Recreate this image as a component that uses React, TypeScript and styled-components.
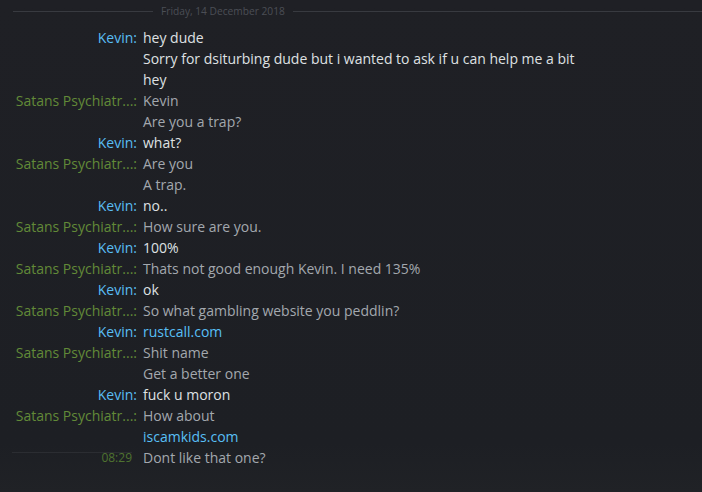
import React from 'react';
import styled, { createGlobalStyle } from 'styled-components';

type Author = 'self' | 'friend';

interface IMessage {
  author?: Author;
  text: string;
  link?: boolean;
  time?: string;
}

const GlobalStyle = createGlobalStyle`
  html, body {
    margin: 0;
    padding: 0;
    background: #1e1f24;
  }
  body {
    font-family: "Open Sans", "Noto Sans", Arial, sans-serif;
  }
`;

const ChatLog = styled.div`
  width: 702px;
  height: 492px;
  overflow: hidden;
  background: linear-gradient(180deg, #1f2025 0%, #1d1f24 90%, #202226 100%);
  box-sizing: border-box;
`;

const DateDivider = styled.div`
  display: flex;
  align-items: center;
  height: 22px;
  padding-left: 13px;
  margin-bottom: 5px;
`;

const DividerLine = styled.div<{ fixed?: boolean }>`
  height: 1px;
  background: #383a40;
  ${(p: { fixed?: boolean }) => (p.fixed ? 'width: 140px;' : 'flex: 1;')}
`;

const DateText = styled.span`
  font-size: 10.2px;
  color: #4b4e55;
  padding: 0 8px;
  white-space: nowrap;
`;

const Row = styled.div`
  display: grid;
  grid-template-columns: 125px 1fr;
  column-gap: 6px;
  padding-left: 12px;
  height: 21px;
  line-height: 21px;
  font-size: 14px;
`;

const Name = styled.div<{ author?: Author }>`
  text-align: right;
  white-space: nowrap;
  color: ${(p: { author?: Author }) => (p.author === 'self' ? '#59bdf3' : '#628a38')};
`;

const Time = styled.div`
  position: relative;
  text-align: right;
  padding-right: 5px;
  font-size: 12px;
  color: #4f7330;

  &::before {
    content: '';
    position: absolute;
    top: 5px;
    left: 0;
    right: 5px;
    height: 1px;
    background: #2b2d32;
  }
`;

const Text = styled.div<{ self: boolean; link?: boolean }>`
  white-space: nowrap;
  color: ${(p: { self: boolean; link?: boolean }) =>
    p.link ? '#58bff5' : p.self ? '#dfe1e3' : '#a3a8ae'};
`;

const messages: IMessage[] = [
  { author: 'self', text: 'hey dude' },
  { text: 'Sorry for dsiturbing dude but i wanted to ask if u can help me a bit' },
  { text: 'hey' },
  { author: 'friend', text: 'Kevin' },
  { text: 'Are you a trap?' },
  { author: 'self', text: 'what?' },
  { author: 'friend', text: 'Are you' },
  { text: 'A trap.' },
  { author: 'self', text: 'no..' },
  { author: 'friend', text: 'How sure are you.' },
  { author: 'self', text: '100%' },
  { author: 'friend', text: 'Thats not good enough Kevin. I need 135%' },
  { author: 'self', text: 'ok' },
  { author: 'friend', text: 'So what gambling website you peddlin?' },
  { author: 'self', text: 'rustcall.com', link: true },
  { author: 'friend', text: 'Shit name' },
  { text: 'Get a better one' },
  { author: 'self', text: 'fuck u moron' },
  { author: 'friend', text: 'How about' },
  { text: 'iscamkids.com', link: true },
  { text: 'Dont like that one?', time: '08:29' }
];

const names: Record<Author, string> = {
  self: 'Kevin:',
  friend: 'Satans Psychiatr...:'
};

export default function App() {
  let current: Author = 'self';
  return (
    <>
      <GlobalStyle />
      <ChatLog>
        <DateDivider>
          <DividerLine fixed />
          <DateText>Friday, 14 December 2018</DateText>
          <DividerLine />
        </DateDivider>
        {messages.map((m, i) => {
          if (m.author) current = m.author;
          return (
            <Row key={i}>
              {m.time ? (
                <Time>{m.time}</Time>
              ) : (
                <Name author={m.author}>{m.author ? names[m.author] : ''}</Name>
              )}
              <Text self={current === 'self'} link={m.link}>
                {m.text}
              </Text>
            </Row>
          );
        })}
      </ChatLog>
    </>
  );
}
